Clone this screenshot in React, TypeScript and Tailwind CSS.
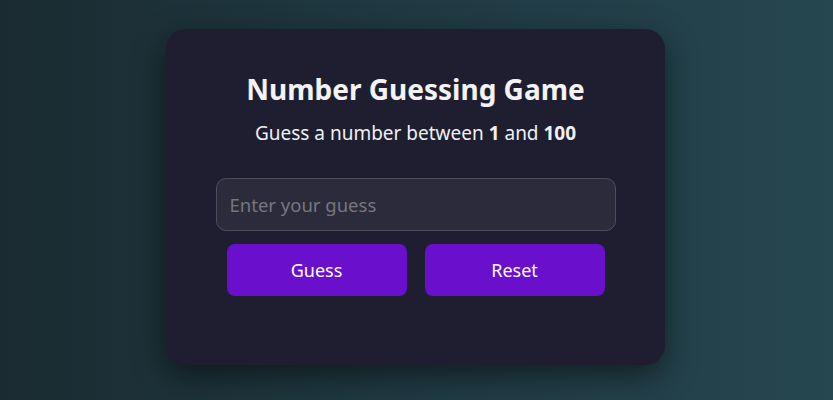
export default function App() {
  return (
    <div
      className="w-full h-[400px] flex items-start justify-center pt-[29px] bg-[linear-gradient(90deg,#1a2b31_0%,#203a43_50%,#264650_100%)]"
      style={{ fontFamily: '"Noto Sans", "Open Sans", sans-serif' }}
    >
      <div className="w-[499px] h-[336px] -translate-x-[1px] rounded-[20px] bg-[#1f1e30] shadow-[0_10px_30px_rgba(0,0,0,0.5)] flex flex-col items-center px-[49px] pt-[42px]">
        <h1 className="text-[28px] leading-[36px] font-bold text-[#f3f3f5]">Number Guessing Game</h1>
        <p className="mt-[13px] text-[19px] leading-[26px] text-[#f0f0f2]">
          Guess a number between <b>1</b> and <b>100</b>
        </p>
        <input
          className="mt-[32px] w-[400px] h-[53px] rounded-[10px] border border-[#4d4c5a] bg-[#2c2b3c] px-[13px] text-[18.5px] text-white placeholder:text-[#77767f] outline-none"
          placeholder="Enter your guess"
        />
        <div className="mt-[13px] flex w-[400px] justify-between px-[11px]">
          <button className="w-[180px] h-[52px] rounded-[8px] bg-[#6a0fcc] text-white text-[18px]">Guess</button>
          <button className="w-[180px] h-[52px] rounded-[8px] bg-[#6a0fcc] text-white text-[18px]">Reset</button>
        </div>
      </div>
    </div>
  );
}
